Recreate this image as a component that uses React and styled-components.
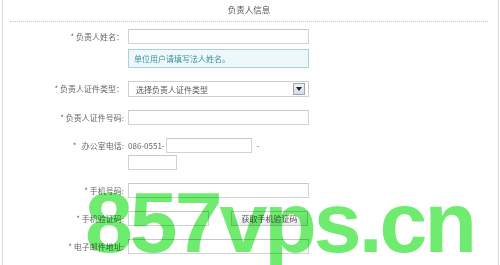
import React from "react";
import styled, { createGlobalStyle } from "styled-components";

const GlobalStyle = createGlobalStyle`
  html, body { margin: 0; padding: 0; background: #fff; }
  body { font-family: "Noto Sans CJK SC", "Noto Sans", sans-serif; }
`;

const Panel = styled.div`
  position: relative;
  box-sizing: border-box;
  margin-left: 2px;
  width: 497px;
  height: 265px;
  border-left: 1px solid #d9d9d9;
  border-right: 1px solid #d9d9d9;
  overflow: hidden;
`;

const Title = styled.div`
  box-sizing: border-box;
  height: 22px;
  margin: 0 10px 0 7px;
  border-bottom: 1px dotted #c4c4c4;
  text-align: center;
  font-size: 8.5px;
  line-height: 18px;
  color: #555;
`;

const Form = styled.div`
  display: flex;
  flex-direction: column;
  gap: 13px;
  padding-top: 7px;
`;

const Row = styled.div`
  display: flex;
  align-items: flex-start;
`;

const Label = styled.div`
  flex-shrink: 0;
  width: 121px;
  text-align: right;
  font-size: 8px;
  line-height: 15px;
  color: #666;
  white-space: pre;
`;

const Field = styled.div`
  margin-left: 4px;
  display: flex;
  flex-direction: column;
  gap: ${(p) => p.$gap || 0}px;
`;

const Line = styled.div`
  display: flex;
  align-items: center;
`;

const Input = styled.div`
  box-sizing: border-box;
  width: ${(p) => p.$w || 181}px;
  height: 15px;
  border: 1px solid #d3d3d3;
  border-top-color: #c8c8c8;
  background: #fff;
`;

const Hint = styled.div`
  box-sizing: border-box;
  width: 181px;
  height: 19px;
  padding-left: 5px;
  border: 1px solid #a9d0da;
  background: #eef8fb;
  color: #3b8ea3;
  font-size: 8px;
  line-height: 17px;
`;

const SelectBox = styled.div`
  box-sizing: border-box;
  width: 181px;
  height: 16px;
  border: 1px solid #cfcfcf;
  display: flex;
  align-items: center;
  justify-content: space-between;
  padding: 0 3px 0 7px;
  font-size: 8px;
  color: #555;
`;

const DropButton = styled.div`
  box-sizing: border-box;
  width: 12px;
  height: 12px;
  border: 1px solid #9aa8b8;
  background: linear-gradient(#eef2f6, #d3dbe5);
  display: flex;
  align-items: center;
  justify-content: center;
`;

const Text = styled.span`
  font-size: 8px;
  color: #666;
  margin: ${(p) => p.$m || "0"};
`;

const Button = styled.div`
  box-sizing: border-box;
  margin-left: 22px;
  width: 77px;
  height: 15px;
  border: 1px solid #cdcdcd;
  background: linear-gradient(#ffffff, #ececec);
  color: #555;
  font-size: 8px;
  line-height: 13px;
  text-align: center;
`;

const Watermark = styled.div`
  position: absolute;
  left: 82px;
  top: 179px;
  font-family: "Liberation Sans", Arial, sans-serif;
  font-weight: bold;
  font-size: 86px;
  line-height: 1;
  letter-spacing: -3px;
  color: #6fec6f;
  mix-blend-mode: multiply;
  pointer-events: none;
  white-space: nowrap;
`;

export default function App() {
  return (
    <>
      <GlobalStyle />
      <Panel>
        <Title>负责人信息</Title>
        <Form>
          <Row>
            <Label>* 负责人姓名：</Label>
            <Field $gap={5}>
              <Input />
              <Hint>单位用户请填写法人姓名。</Hint>
            </Field>
          </Row>
          <Row>
            <Label>* 负责人证件类型：</Label>
            <Field>
              <SelectBox>
                <span>选择负责人证件类型</span>
                <DropButton>
                  <svg width="6" height="4" viewBox="0 0 6 4">
                    <path d="M0 0 L6 0 L3 4 Z" fill="#222" />
                  </svg>
                </DropButton>
              </SelectBox>
            </Field>
          </Row>
          <Row>
            <Label>* 负责人证件号码:</Label>
            <Field>
              <Input />
            </Field>
          </Row>
          <Row>
            <Label>{"*   办公室电话:"}</Label>
            <Field $gap={2}>
              <Line>
                <Text $m="0 1px 0 0">086-0551-</Text>
                <Input $w={86} />
                <Text $m="0 0 0 5px">-</Text>
              </Line>
              <Input $w={49} />
            </Field>
          </Row>
          <Row>
            <Label>* 手机号码:</Label>
            <Field>
              <Input />
            </Field>
          </Row>
          <Row>
            <Label>* 手机验证码:</Label>
            <Field>
              <Line>
                <Input $w={81} />
                <Button>获取手机验证码</Button>
              </Line>
            </Field>
          </Row>
          <Row>
            <Label>* 电子邮件地址:</Label>
            <Field>
              <Input />
            </Field>
          </Row>
        </Form>
        <Watermark>857vps.cn</Watermark>
      </Panel>
    </>
  );
}
